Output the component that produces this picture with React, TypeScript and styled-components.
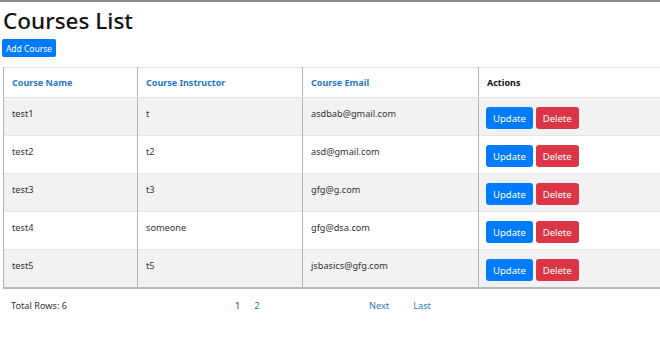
import styled, { createGlobalStyle } from "styled-components"

type course = {
  name: string
  instructor: string
  email: string
}

const courses: course[] = [
  { name: 'test1', instructor: 't', email: 'asdbab@gmail.com' },
  { name: 'test2', instructor: 't2', email: 'asd@gmail.com' },
  { name: 'test3', instructor: 't3', email: 'gfg@g.com' },
  { name: 'test4', instructor: 'someone', email: 'gfg@dsa.com' },
  { name: 'test5', instructor: 't5', email: 'jsbasics@gfg.com' },
]

const GlobalStyle = createGlobalStyle`
  body {
    margin: 0;
    font-family: "Noto Sans", "Open Sans", sans-serif;
    color: #212529;
    background: #fff;
  }
`

export default function App() {
  return (
    <Page>
      <GlobalStyle />
      <Title>Courses List</Title>
      <AddButton>Add Course</AddButton>
      <Table>
        <colgroup>
          <col style={{ width: 134 }} />
          <col style={{ width: 165 }} />
          <col style={{ width: 176 }} />
          <col style={{ width: 182 }} />
        </colgroup>
        <thead>
          <tr>
            <HeadCell $link>Course Name</HeadCell>
            <HeadCell $link>Course Instructor</HeadCell>
            <HeadCell $link>Course Email</HeadCell>
            <HeadCell>Actions</HeadCell>
          </tr>
        </thead>
        <tbody>
          {courses.map((item, index) => (
            <Row key={index} $odd={index % 2 === 0}>
              <Cell>{item.name}</Cell>
              <Cell>{item.instructor}</Cell>
              <Cell>{item.email}</Cell>
              <Cell>
                <Actions>
                  <ActionButton $kind="update">Update</ActionButton>
                  <ActionButton $kind="delete">Delete</ActionButton>
                </Actions>
              </Cell>
            </Row>
          ))}
        </tbody>
      </Table>
      <Footer>
        <TotalRows>Total Rows: 6</TotalRows>
        <Pages>
          <PageLink $current>1</PageLink>
          <PageLink>2</PageLink>
        </Pages>
        <NavLinks>
          <PageLink>Next</PageLink>
          <PageLink>Last</PageLink>
        </NavLinks>
      </Footer>
    </Page>
  )
}

const Page = styled.div`
	border-top: 2px solid #8a8a8a;
	padding: 0 0 0 3px;
	height: 336px;
	overflow: hidden;
`
const Title = styled.h1`
	font-size: 22.5px;
	font-weight: 500;
	line-height: 30px;
	margin: 4px 0 3px 0;
	color: #111;
`
const AddButton = styled.button`
	display: block;
	box-sizing: border-box;
	margin-left: -1px;
	height: 18px;
	width: 54px;
	padding: 0;
	border: none;
	border-radius: 2px;
	background: #007bff;
	color: #fff;
	font-family: inherit;
	font-size: 8.5px;
`
const Table = styled.table`
	margin-top: 10px;
	width: 657px;
	table-layout: fixed;
	border-collapse: collapse;
	font-size: 9.2px;
	border-top: 1px solid #e4e4e4;
	border-bottom: 2px solid #b8b8b8;
`
const HeadCell = styled.th<{ $link?: boolean }>`
	height: 30px;
	box-sizing: border-box;
	padding: 0 8px;
	text-align: left;
	font-weight: 700;
	font-size: 9px;
	color: ${props => props.$link ? '#1f78c8' : '#111'};
	border-left: 1px solid #b5b5b5;
	border-bottom: 1px solid #e0e0e0;
`
const Row = styled.tr<{ $odd: boolean }>`
	background: ${props => props.$odd ? '#f2f2f2' : '#fff'};
	border-top: 1px solid #e6e6e6;
`
const Cell = styled.td`
	height: 38px;
	box-sizing: border-box;
	padding: 8px 8px 0 8px;
	vertical-align: top;
	line-height: 15px;
	color: #333;
	border-left: 1px solid #b5b5b5;
`
const Actions = styled.div`
	display: flex;
	gap: 3px;
	margin-top: 1px;
	margin-left: -1px;
`
const ActionButton = styled.button<{ $kind: 'update' | 'delete' }>`
	height: 22px;
	padding: 0 7px;
	border: none;
	border-radius: 3px;
	font-family: inherit;
	font-size: 9.5px;
	color: #fff;
	background: ${props => props.$kind === 'update' ? '#007bff' : '#dc3545'};
`
const Footer = styled.div`
	display: flex;
	align-items: center;
	height: 34px;
	font-size: 9.2px;
	color: #333;
`
const TotalRows = styled.span`
	margin-left: 8px;
	width: 224px;
`
const Pages = styled.div`
	display: flex;
	gap: 14px;
	width: 134px;
`
const NavLinks = styled.div`
	display: flex;
	gap: 24px;
`
const PageLink = styled.span<{ $current?: boolean }>`
	color: ${props => props.$current ? '#333' : '#2a7ac0'};
`
